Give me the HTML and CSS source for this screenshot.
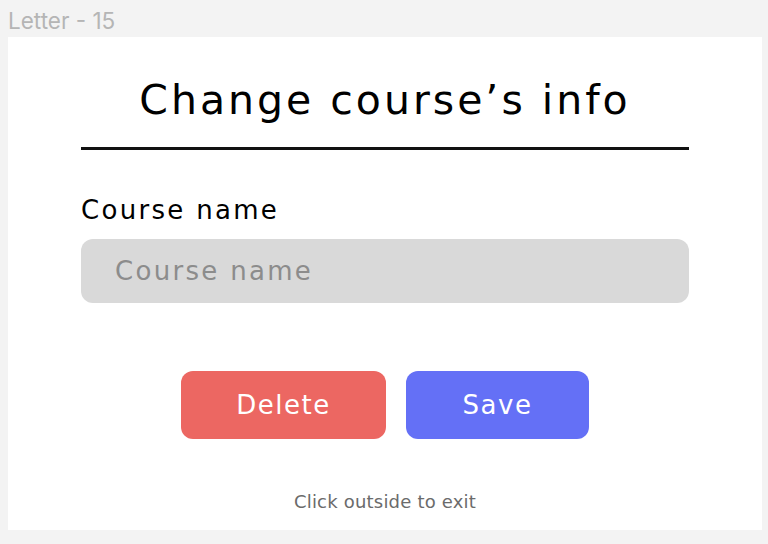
FILE: index.html
```html
<!DOCTYPE html>
<html>
<head>
<meta charset="utf-8">
<link rel="stylesheet" href="styles.css">
</head>
<body>
<div class="frame-label">Letter - 15</div>
<div class="frame">
  <h1 class="title">Change course’s info</h1>
  <div class="rule"></div>
  <label class="field-label" for="course">Course name</label>
  <input class="field" id="course" type="text" placeholder="Course name">
  <div class="actions">
    <button class="btn btn-delete">Delete</button>
    <button class="btn btn-save">Save</button>
  </div>
  <p class="hint">Click outside to exit</p>
</div>
</body>
</html>
```
FILE: styles.css
```css
* { box-sizing: border-box; }
html, body { margin: 0; padding: 0; }
body {
  background: #f3f3f3;
  width: 768px;
  height: 544px;
  overflow: hidden;
  font-family: "DejaVu Sans", "Noto Sans", sans-serif;
}
.frame-label {
  height: 37px;
  padding: 7px 0 0 8px;
  font-family: "Inter", sans-serif;
  font-size: 22.5px;
  line-height: 28px;
  color: #b5b5b5;
}
.frame {
  margin-left: 8px;
  width: 754px;
  height: 493px;
  background: #ffffff;
  display: flex;
  flex-direction: column;
  align-items: center;
}
.title {
  margin: 38px 0 0;
  font-weight: 400;
  font-size: 41px;
  letter-spacing: 3px;
  line-height: 50px;
  color: #000;
}
.rule {
  margin-top: 22px;
  width: 608px;
  height: 3px;
  background: #111;
}
.field-label {
  align-self: flex-start;
  margin: 44px 0 0 73px;
  font-size: 26px;
  letter-spacing: 2.3px;
  line-height: 32px;
  color: #000;
}
.field {
  margin-top: 13px;
  width: 608px;
  height: 64px;
  border: none;
  border-radius: 12px;
  background: #d9d9d9;
  padding: 0 0 0 34px;
  font-family: inherit;
  font-size: 26px;
  letter-spacing: 2.3px;
  color: #000;
  outline: none;
}
.field::placeholder { color: #8c8c8c; }
.actions {
  margin-top: 68px;
  display: flex;
  gap: 20px;
}
.btn {
  height: 68px;
  border: none;
  border-radius: 12px;
  color: #fff;
  font-family: inherit;
  font-size: 26px;
  letter-spacing: 1.5px;
  padding: 0;
}
.btn-delete { width: 205px; background: #ec6762; }
.btn-save { width: 183px; background: #6470f6; }
.hint {
  margin: 51px 0 0;
  font-size: 18px;
  letter-spacing: 0.2px;
  line-height: 24px;
  color: #6b6b6b;
}
```
